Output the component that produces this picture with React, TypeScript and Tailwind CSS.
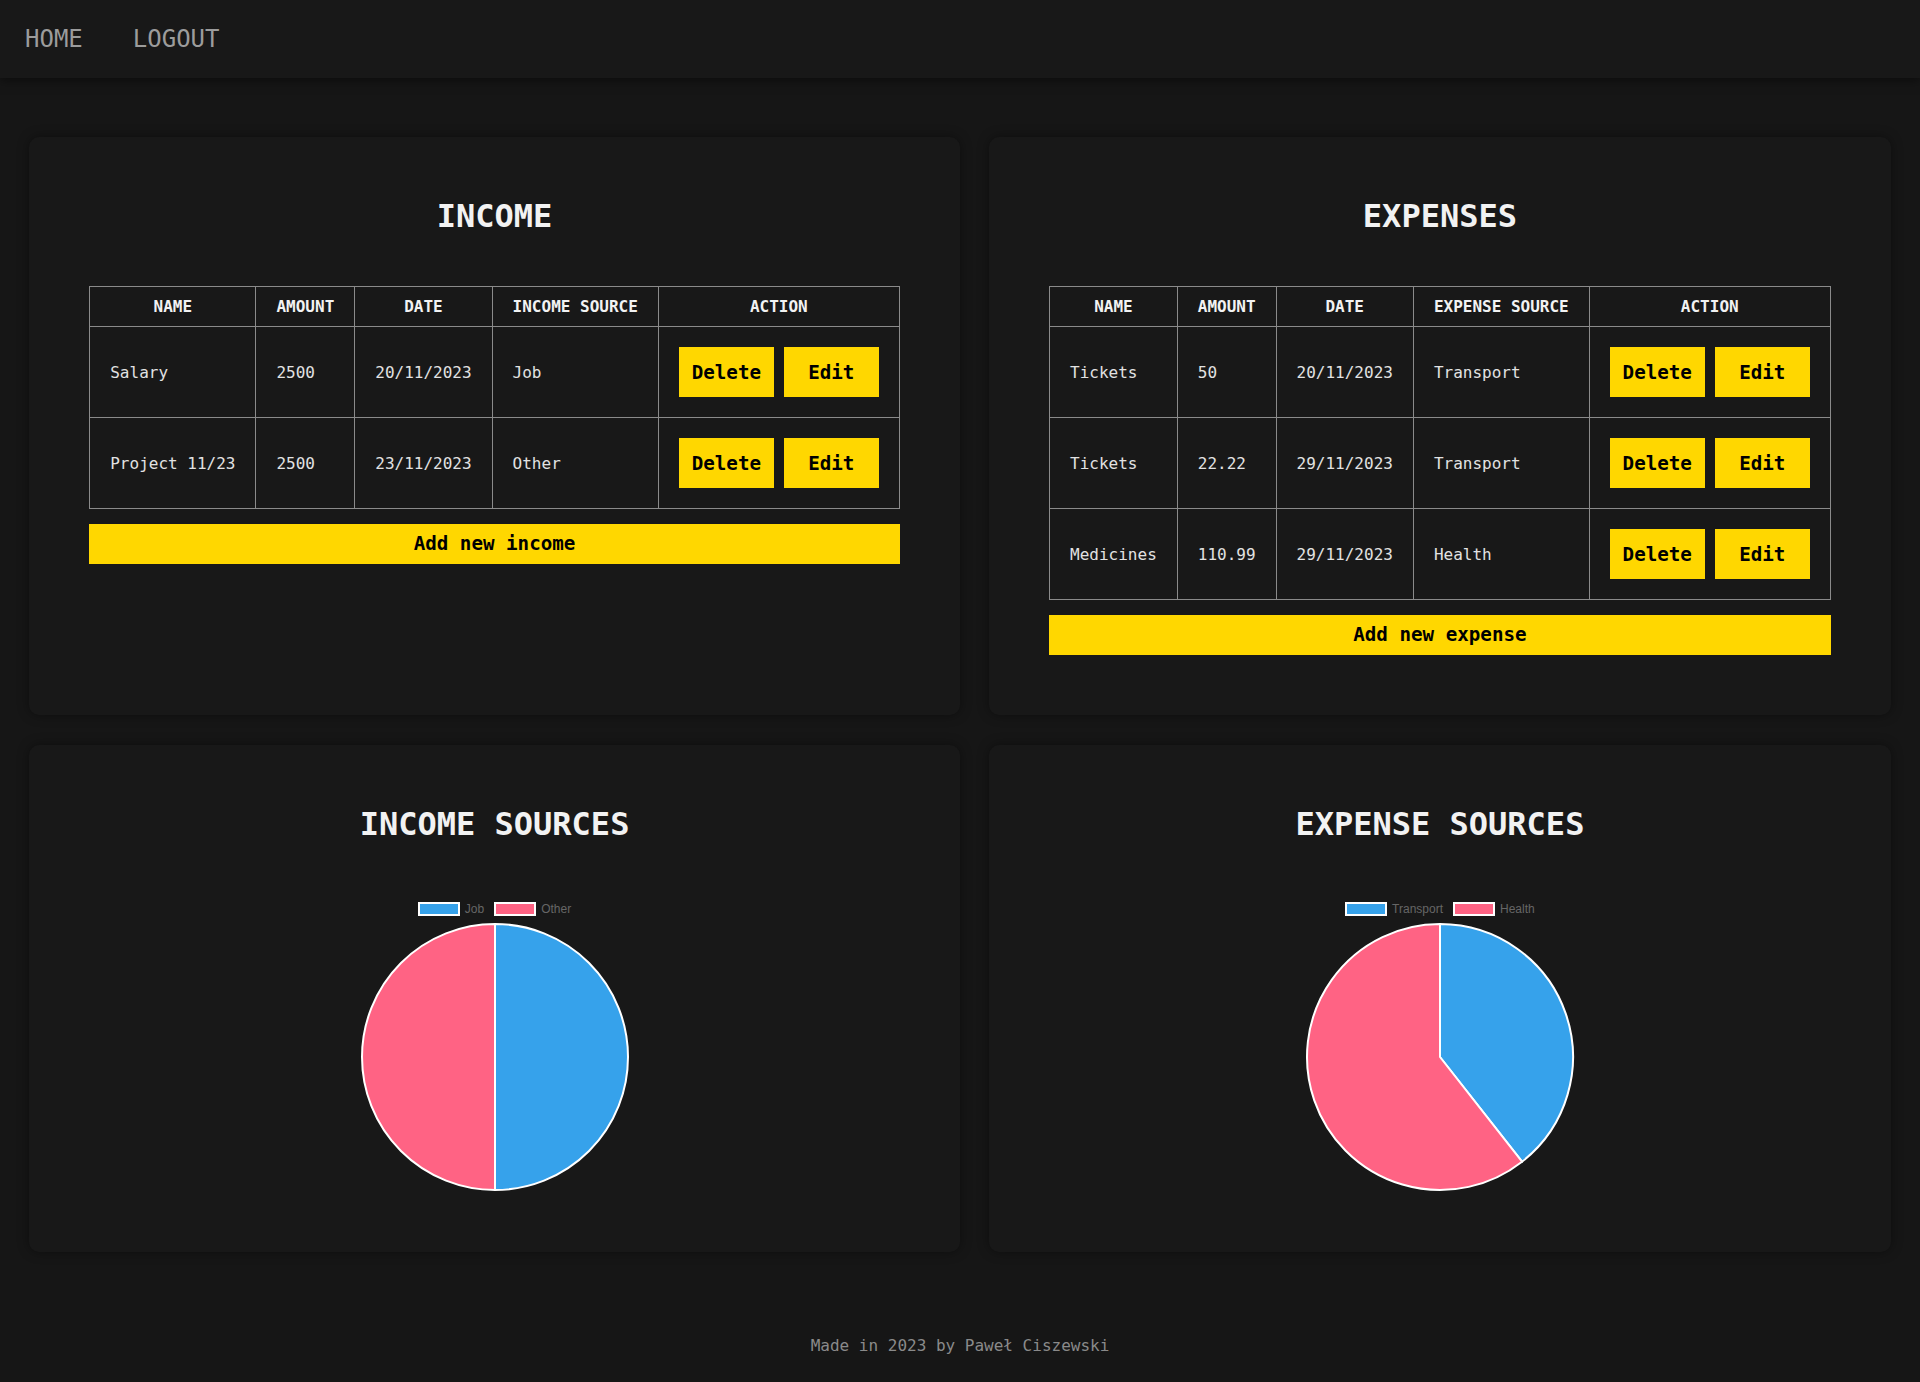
import React from "react";

const mono = { fontFamily: '"DejaVu Sans Mono", "Liberation Mono", monospace' };

type Row = { name: string; amount: string; date: string; source: string };

const incomeRows: Row[] = [
  { name: "Salary", amount: "2500", date: "20/11/2023", source: "Job" },
  { name: "Project 11/23", amount: "2500", date: "23/11/2023", source: "Other" },
];

const expenseRows: Row[] = [
  { name: "Tickets", amount: "50", date: "20/11/2023", source: "Transport" },
  { name: "Tickets", amount: "22.22", date: "29/11/2023", source: "Transport" },
  { name: "Medicines", amount: "110.99", date: "29/11/2023", source: "Health" },
];

function Card({ children }: { children: React.ReactNode }) {
  return (
    <div className="bg-[#181818] rounded-[10px] shadow-[0_0_12px_rgba(0,0,0,0.4)] p-[60px] flex flex-col">
      {children}
    </div>
  );
}

function Title({ children }: { children: React.ReactNode }) {
  return (
    <h2 className="text-center text-[32px] leading-[38px] font-bold text-[#f2f2f2] mb-[51px]">{children}</h2>
  );
}

function DataTable({ rows, sourceLabel, addLabel }: { rows: Row[]; sourceLabel: string; addLabel: string }) {
  const th = "border border-[#8a8a8a] px-[20px] py-[10px] text-[16px] leading-[19px] font-bold text-[#f2f2f2] text-center whitespace-nowrap";
  const td = "border border-[#8a8a8a] px-[20px] py-[20px] text-[16px] leading-[19px] text-[#e2e2e2] text-left whitespace-nowrap align-middle";
  return (
    <div className="flex flex-col">
      <table className="border-collapse w-full">
        <thead>
          <tr>
            <th className={th}>NAME</th>
            <th className={th}>AMOUNT</th>
            <th className={th}>DATE</th>
            <th className={th}>{sourceLabel}</th>
            <th className={th}>ACTION</th>
          </tr>
        </thead>
        <tbody>
          {rows.map((r, i) => (
            <tr key={i}>
              <td className={td}>{r.name}</td>
              <td className={td}>{r.amount}</td>
              <td className={td}>{r.date}</td>
              <td className={td}>{r.source}</td>
              <td className={td}>
                <div className="flex gap-[10px]">
                  <button className="w-[95px] h-[50px] bg-[#ffd700] text-black font-bold text-[19.2px]" style={mono}>
                    Delete
                  </button>
                  <button className="w-[95px] h-[50px] bg-[#ffd700] text-black font-bold text-[19.2px]" style={mono}>
                    Edit
                  </button>
                </div>
              </td>
            </tr>
          ))}
        </tbody>
      </table>
      <button className="w-full h-[40px] mt-[15px] bg-[#ffd700] text-black font-bold text-[19.2px]" style={mono}>
        {addLabel}
      </button>
    </div>
  );
}

function slicePath(cx: number, cy: number, r: number, a0: number, a1: number) {
  const toXY = (a: number) => {
    const rad = (a - 90) * (Math.PI / 180);
    return [cx + r * Math.cos(rad), cy + r * Math.sin(rad)];
  };
  const [x0, y0] = toXY(a0);
  const [x1, y1] = toXY(a1);
  const large = a1 - a0 > 180 ? 1 : 0;
  return `M ${cx} ${cy} L ${x0} ${y0} A ${r} ${r} 0 ${large} 1 ${x1} ${y1} Z`;
}

function Pie({ labels, values }: { labels: string[]; values: number[] }) {
  const colors = ["#36a2eb", "#ff6384"];
  const total = values.reduce((a, b) => a + b, 0);
  let acc = 0;
  const slices = values.map((v, i) => {
    const a0 = (acc / total) * 360;
    acc += v;
    const a1 = (acc / total) * 360;
    return { d: slicePath(135, 135, 133, a0, a1), color: colors[i] };
  });
  return (
    <div className="flex flex-col items-center">
      <div className="flex items-center gap-[10px] mt-[8px] h-[14px] mb-[6px]">
        {labels.map((l, i) => (
          <div key={l} className="flex items-center">
            <div
              className={`w-[42px] h-[14px] border-2 border-white ${i === 0 ? "bg-[#36a2eb]" : "bg-[#ff6384]"}`}
            />
            <span
              className="ml-[5px] text-[12px] leading-[14px] text-[#666666]"
              style={{ fontFamily: '"Liberation Sans", Arial, sans-serif' }}
            >
              {l}
            </span>
          </div>
        ))}
      </div>
      <svg width="270" height="270" viewBox="0 0 270 270">
        {slices.map((s, i) => (
          <path key={i} d={s.d} fill={s.color} stroke="#ffffff" strokeWidth="2" strokeLinejoin="round" />
        ))}
      </svg>
    </div>
  );
}

export default function App() {
  return (
    <div className="min-h-screen bg-[#161616]" style={mono}>
      <nav className="h-[78px] bg-[#181818] shadow-[0_2px_10px_rgba(0,0,0,0.5)] flex items-center relative z-10">
        <a className="px-[25px] text-[24px] text-[#9c9c9c]">HOME</a>
        <a className="px-[25px] text-[24px] text-[#9c9c9c]">LOGOUT</a>
      </nav>
      <main className="pt-[59px] grid grid-cols-[auto_auto] justify-evenly gap-y-[30px]">
        <Card>
          <Title>INCOME</Title>
          <DataTable rows={incomeRows} sourceLabel="INCOME SOURCE" addLabel="Add new income" />
        </Card>
        <Card>
          <Title>EXPENSES</Title>
          <DataTable rows={expenseRows} sourceLabel="EXPENSE SOURCE" addLabel="Add new expense" />
        </Card>
        <Card>
          <Title>INCOME SOURCES</Title>
          <Pie labels={["Job", "Other"]} values={[2500, 2500]} />
        </Card>
        <Card>
          <Title>EXPENSE SOURCES</Title>
          <Pie labels={["Transport", "Health"]} values={[72.22, 110.99]} />
        </Card>
      </main>
      <footer className="pt-[84px] pb-[26px] text-center text-[16px] leading-[19px] text-[#8a8a8a]">
        Made in 2023 by Paweł Ciszewski
      </footer>
    </div>
  );
}
